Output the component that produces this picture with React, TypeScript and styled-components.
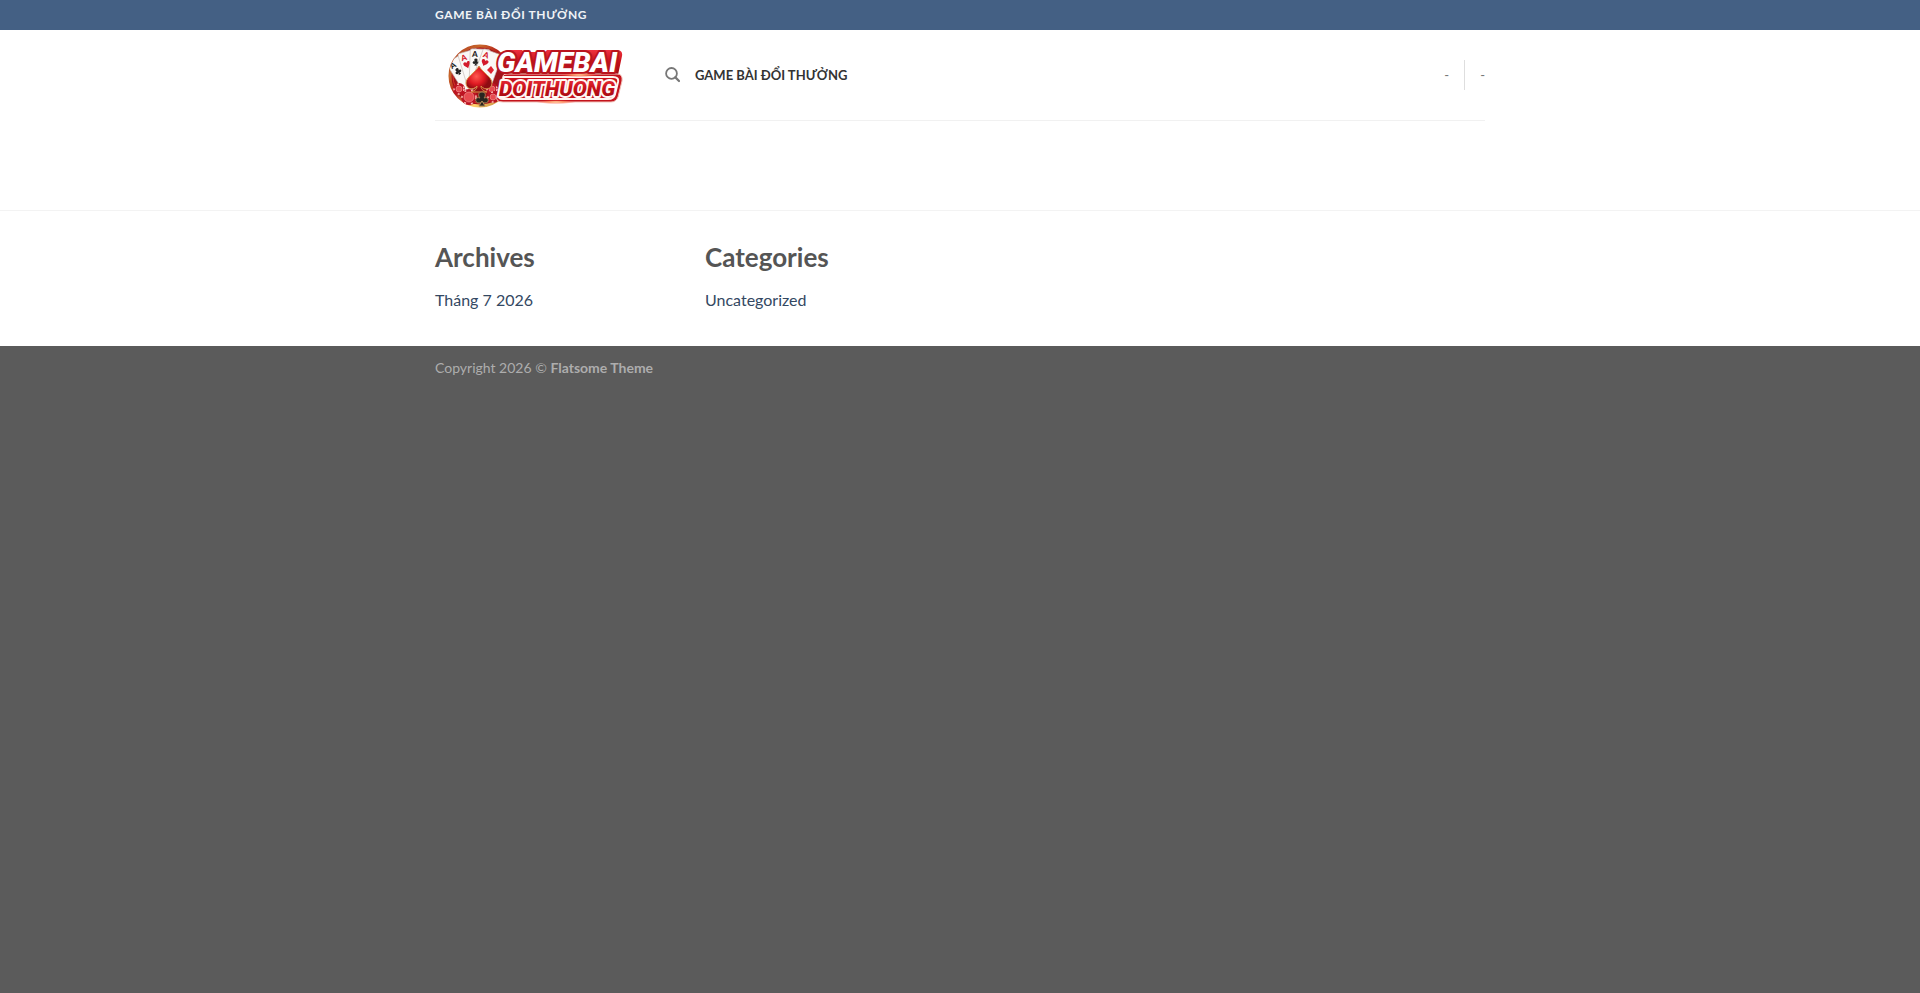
import React from "react";
import styled, { createGlobalStyle } from "styled-components";

const GlobalStyle = createGlobalStyle`
  *, *::before, *::after { box-sizing: border-box; }
  body {
    margin: 0;
    background: #5b5b5b;
    color: #777;
    font-family: Lato, "Noto Sans", sans-serif;
    font-size: 16px;
    line-height: 26px;
  }
  a { color: inherit; text-decoration: none; }
`;

const Container = styled.div`
  width: 100%;
  max-width: 1080px;
  margin: 0 auto;
  padding: 0 15px;
`;

const TopBar = styled.div`
  background: #446084;
`;

const TopBarRow = styled(Container)`
  display: flex;
  align-items: center;
  min-height: 30px;
`;

const TopTitle = styled.strong`
  color: #f0f3f6;
  font-size: 12px;
  font-weight: 700;
  line-height: 16px;
  letter-spacing: 0.05em;
`;

const Header = styled.header`
  background: #fff;
`;

const HeaderRow = styled.div`
  display: flex;
  align-items: center;
  min-height: 91px;
  border-bottom: 1px solid #f1f1f1;
`;

const LogoLink = styled.a`
  display: block;
  width: 200px;
  height: 90px;
  margin-right: 30px;
`;

const Nav = styled.nav`
  display: flex;
  flex: 1;
  align-items: center;
  gap: 15px;
`;

const SearchButton = styled.button`
  display: flex;
  padding: 0;
  border: 0;
  background: none;
  color: #777;
  cursor: pointer;
`;

const NavLink = styled.a`
  color: #333;
  font-size: 13px;
  font-weight: 700;
  line-height: 16px;
`;

const Contacts = styled.ul`
  display: flex;
  align-items: center;
  margin: 0;
  padding: 0;
  list-style: none;
  font-size: 13px;
  line-height: 30px;
`;

const Contact = styled.li`
  & + & {
    margin-left: 15px;
    padding-left: 15px;
    border-left: 1px solid #dedede;
  }
`;

const Main = styled.main`
  min-height: 89px;
  background: #fff;
`;

const Widgets = styled.section`
  padding: 29px 0 31px;
  border-top: 1px solid #f3f3f3;
  background: #fff;
`;

const WidgetGrid = styled(Container)`
  display: grid;
  grid-template-columns: repeat(4, 1fr);
  column-gap: 30px;
`;

const WidgetTitle = styled.h2`
  margin: 0 0 10px;
  color: #555;
  font-size: 26px;
  font-weight: 700;
  line-height: 34px;
`;

const WidgetList = styled.ul`
  margin: 0;
  padding: 0;
  list-style: none;
  color: #334862;
  line-height: 31px;
`;

const Footer = styled.footer`
  padding: 10px 0 15px;
  color: #adadad;
  font-size: 14px;
  line-height: 24px;
`;

const suits = {
  club: "M0-7C-4-7-4-3-2-1C-7-3-8 4-3 4C-1 4-1 3 0 2L-3 7H3L0 2C1 3 1 4 3 4C8 4 7-3 2-1C4-3 4-7 0-7Z",
  heart: "M0 7C-2 3-7 1-7-3C-7-7-2-8 0-4C2-8 7-7 7-3C7 1 2 3 0 7Z",
};

const cards = [
  { x: 21, y: 38, angle: -32, suit: suits.club, color: "#222" },
  { x: 31, y: 31, angle: -17, suit: suits.heart, color: "#d3192a" },
  { x: 41, y: 28, angle: 2, suit: suits.club, color: "#222" },
  { x: 51, y: 29, angle: 20, suit: suits.heart, color: "#d3192a" },
];

const chips = [
  { x: 24, y: 59, r: 6 },
  { x: 57, y: 59, r: 6 },
  { x: 58, y: 67, r: 6 },
  { x: 34, y: 67, r: 8 },
];

function Logo() {
  return (
    <svg width="200" height="90" viewBox="0 0 200 90" role="img" aria-label="Gamebai Doithuong">
      <defs>
        <linearGradient id="gold" x1="0" y1="0" x2="1" y2="1">
          <stop offset="0" stopColor="#a92d1d" />
          <stop offset=".25" stopColor="#c8682b" />
          <stop offset=".45" stopColor="#b41c19" />
          <stop offset=".7" stopColor="#ffd36d" />
          <stop offset="1" stopColor="#a86320" />
        </linearGradient>
        <linearGradient id="red" x1="0" y1="0" x2="0" y2="1">
          <stop offset="0" stopColor="#ef313d" />
          <stop offset=".5" stopColor="#c50e18" />
          <stop offset="1" stopColor="#950e12" />
        </linearGradient>
        <radialGradient id="shine">
          <stop offset="0" stopColor="#fff0c0" />
          <stop offset=".4" stopColor="#ff9562" stopOpacity=".8" />
          <stop offset="1" stopColor="#ff3c34" stopOpacity="0" />
        </radialGradient>
        <radialGradient id="heart" cx=".4" cy=".4">
          <stop offset="0" stopColor="#ff5a50" />
          <stop offset=".6" stopColor="#df1a22" />
          <stop offset="1" stopColor="#8e0c12" />
        </radialGradient>
        <clipPath id="disc"><circle cx="45" cy="46" r="31" /></clipPath>
      </defs>

      <circle cx="45" cy="46" r="30" fill="#a1131a" stroke="url(#gold)" strokeWidth="3" />
      <circle cx="45" cy="46" r="27" fill="none" stroke="#d53525" />
      <g clipPath="url(#disc)">
        {cards.map((card) => (
          <g key={card.x} transform={`translate(${card.x} ${card.y}) rotate(${card.angle})`}>
            <rect x="-6" y="-9" width="20" height="36" rx="2" fill="#faf8f6" stroke="#c4b9b4" strokeWidth=".6" />
            <text x="-4" y="-1" fontFamily="Lato, sans-serif" fontSize="8" fontWeight="900" fill={card.color}>A</text>
            <path d={card.suit} transform="translate(0 4) scale(.5)" fill={card.color} />
          </g>
        ))}
      </g>
      <path d="M56 36L59 40L56 44L52 40Z" fill="#df2430" />
      {chips.map((chip) => (
        <g key={chip.x}>
          <circle cx={chip.x} cy={chip.y} r={chip.r} fill="#bd1423" />
          <circle cx={chip.x} cy={chip.y} r={chip.r - 1} fill="none" stroke="#ffc9be" strokeWidth="1.4" strokeDasharray="2 5" />
          <circle cx={chip.x} cy={chip.y} r={chip.r - 3} fill="#e74b50" stroke="#f4aea6" strokeWidth=".5" />
        </g>
      ))}
      <path
        d="M44 36C40 43 31 47 31 53C31 59 38 61 42 56C42 60 39 61 36 62H52C49 61 46 60 46 56C50 61 57 59 57 53C57 47 48 43 44 36Z"
        fill="url(#heart)"
        stroke="#d99047"
        strokeWidth="1"
      />
      <path d={suits.club} transform="translate(47 69)" fill="#292520" stroke="#a28253" strokeWidth="1" />

      <path d="M72 20H87L89 22H110L112 20H183Q188 21 187 26L183 45H77Q63 44 63 34Q65 23 72 20Z" fill="url(#red)" />
      <path d="M68 46Q68 44 72 44H182Q188 44 187 51L183 67Q181 72 176 72H68Q60 72 62 66Z" fill="#c3131c" stroke="#f2c4bb" strokeWidth="1" />
      <path d="M69 47H178Q184 47 183 52L180 64Q179 69 173 69H68Q63 69 64 65Z" fill="#c8121c" stroke="#fff4ef" strokeWidth="2" />
      <g fontFamily="Roboto, sans-serif" fontWeight="900" fontStyle="italic" strokeLinejoin="round" paintOrder="stroke">
        <text x="62" y="42" fontSize="28" fill="#fff" stroke="#b9141e" strokeWidth="4">GAMEBAI</text>
        <text x="64" y="66" fontSize="21" fill="url(#red)" stroke="#fff8f4" strokeWidth="4">DOITHUONG</text>
      </g>
      <ellipse cx="144" cy="45" rx="20" ry="2" fill="url(#shine)" />
      <ellipse cx="121" cy="72" rx="20" ry="2" fill="url(#shine)" />
    </svg>
  );
}

function SearchIcon() {
  return (
    <svg width="15" height="16" viewBox="0 0 15 16" fill="none" stroke="currentColor" strokeWidth="1.8" aria-hidden="true">
      <circle cx="6.5" cy="6.4" r="5.4" />
      <path d="M10.4 10.4L14 14" strokeWidth="2.2" strokeLinecap="round" />
    </svg>
  );
}

export default function App() {
  return (
    <>
      <GlobalStyle />
      <TopBar>
        <TopBarRow><TopTitle>GAME BÀI ĐỔI THƯỞNG</TopTitle></TopBarRow>
      </TopBar>
      <Header>
        <Container>
          <HeaderRow>
            <LogoLink href="#"><Logo /></LogoLink>
            <Nav>
              <SearchButton type="button" aria-label="Search"><SearchIcon /></SearchButton>
              <NavLink href="#">GAME BÀI ĐỔI THƯỞNG</NavLink>
            </Nav>
            <Contacts>
              <Contact>-</Contact>
              <Contact>-</Contact>
            </Contacts>
          </HeaderRow>
        </Container>
      </Header>
      <Main />
      <Widgets>
        <WidgetGrid>
          <section>
            <WidgetTitle>Archives</WidgetTitle>
            <WidgetList><li><a href="#">Tháng 7 2026</a></li></WidgetList>
          </section>
          <section>
            <WidgetTitle>Categories</WidgetTitle>
            <WidgetList><li><a href="#">Uncategorized</a></li></WidgetList>
          </section>
        </WidgetGrid>
      </Widgets>
      <Footer>
        <Container>Copyright 2026 © <strong>Flatsome Theme</strong></Container>
      </Footer>
    </>
  );
}
